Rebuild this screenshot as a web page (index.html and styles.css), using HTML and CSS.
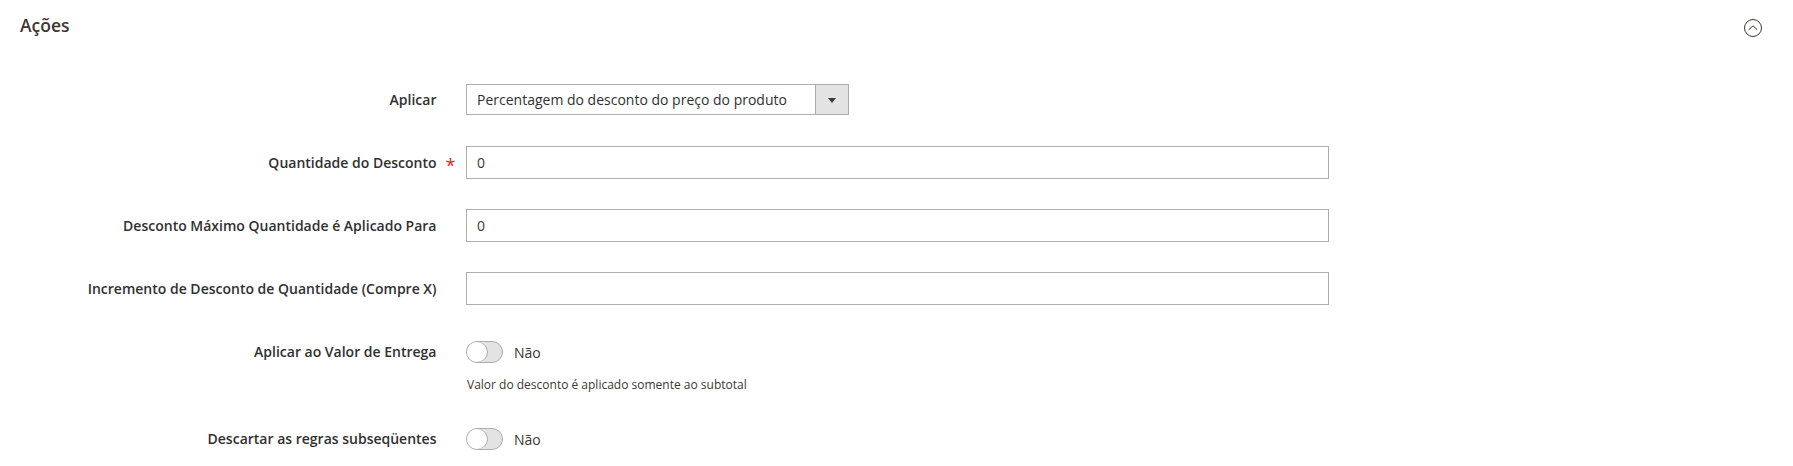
FILE: index.html
```html
<!DOCTYPE html>
<html>
  <head>
    <title>Ações</title>
    <link rel="stylesheet" href="styles.css">
  </head>
  <body>
    <div class="section-header">
      <h2>Ações</h2>
      <svg class="collapse-icon" width="20" height="20" viewBox="0 0 20 20">
        <circle cx="10" cy="10" r="8.5" fill="none" stroke="#41362f" stroke-width="1" />
        <path d="M5.8 11.6 L10 7.8 L14.2 11.6" fill="none" stroke="#41362f" stroke-width="1" />
      </svg>
    </div>

    <form class="fields">
      <div class="field field-select">
        <label>Aplicar</label>
        <span class="required"></span>
        <div class="select">
          <span class="select-text">Percentagem do desconto do preço do produto</span>
          <span class="select-arrow"><i></i></span>
        </div>
      </div>

      <div class="field">
        <label>Quantidade do Desconto</label>
        <span class="required">*</span>
        <input type="text" value="0" />
      </div>

      <div class="field">
        <label>Desconto Máximo Quantidade é Aplicado Para</label>
        <span class="required"></span>
        <input type="text" value="0" />
      </div>

      <div class="field">
        <label>Incremento de Desconto de Quantidade (Compre X)</label>
        <span class="required"></span>
        <input type="text" />
      </div>

      <div class="field field-toggle">
        <label>Aplicar ao Valor de Entrega</label>
        <span class="required"></span>
        <div class="toggle-wrap">
          <div class="toggle-line">
            <span class="toggle"><i></i></span>
            <span class="toggle-label">Não</span>
          </div>
          <div class="note">Valor do desconto é aplicado somente ao subtotal</div>
        </div>
      </div>

      <div class="field field-toggle">
        <label>Descartar as regras subseqüentes</label>
        <span class="required"></span>
        <div class="toggle-wrap">
          <div class="toggle-line">
            <span class="toggle"><i></i></span>
            <span class="toggle-label">Não</span>
          </div>
        </div>
      </div>
    </form>
  </body>
</html>
```

FILE: styles.css
```css
html,
body {
  height: 466px;
  overflow: hidden;
}
body {
  margin: 0;
  font-family: "Open Sans", sans-serif;
  font-size: 14px;
  color: #303030;
  background-color: #fff;
}
.section-header {
  display: flex;
  justify-content: space-between;
  align-items: center;
  height: 50px;
  padding: 0 30px 0 20px;
}
.section-header h2 {
  margin: 0;
  font-size: 17.5px;
  font-weight: 600;
  color: #41362f;
}
.collapse-icon {
  margin-top: 6px;
}
.fields {
  padding-top: 34px;
}
.field {
  display: flex;
  align-items: center;
  margin-bottom: 30px;
}
.field-select {
  margin-bottom: 31px;
}
.field-toggle {
  align-items: flex-start;
  margin-top: 36px;
  margin-bottom: 0;
}
.field-toggle + .field-toggle {
  margin-top: 35px;
}
.field label {
  width: 436.5px;
  text-align: right;
  font-weight: 600;
  color: #303030;
  line-height: 20px;
}
.field-toggle label {
  line-height: 22px;
}
.required {
  width: 29.5px;
  padding-left: 9px;
  box-sizing: border-box;
  color: #e22626;
  font-size: 18px;
  line-height: 20px;
  position: relative;
  top: 2px;
}
input[type="text"] {
  width: 863px;
  height: 33px;
  padding: 0 10px;
  border: 1px solid #adadad;
  box-sizing: border-box;
  font-family: "Open Sans", sans-serif;
  font-size: 14px;
  color: #41362f;
  background-color: #fff;
}
.select {
  display: flex;
  width: 383px;
  height: 31px;
  border: 1px solid #adadad;
  box-sizing: border-box;
}
.select-text {
  flex-grow: 1;
  padding-left: 10px;
  line-height: 29px;
}
.select-arrow {
  display: flex;
  justify-content: center;
  align-items: center;
  width: 32px;
  border-left: 1px solid #adadad;
  background-color: #e3e3e3;
}
.select-arrow i {
  width: 0;
  height: 0;
  margin-top: 2px;
  border-top: 5px solid #41362f;
  border-left: 4px solid transparent;
  border-right: 4px solid transparent;
}
.toggle-line {
  display: flex;
  align-items: center;
  height: 22px;
}
.toggle {
  display: block;
  width: 37px;
  height: 22px;
  border: 1px solid #adadad;
  border-radius: 11px;
  box-sizing: border-box;
  background-color: #e3e3e3;
}
.toggle i {
  display: block;
  width: 20px;
  height: 20px;
  border-radius: 50%;
  background-color: #fff;
  box-shadow: 1px 0 0 #adadad;
}
.toggle-label {
  margin-left: 11px;
  color: #41362f;
}
.note {
  margin: 13px 0 0 1px;
  font-size: 12px;
  line-height: 17px;
  color: #41362f;
}
```
